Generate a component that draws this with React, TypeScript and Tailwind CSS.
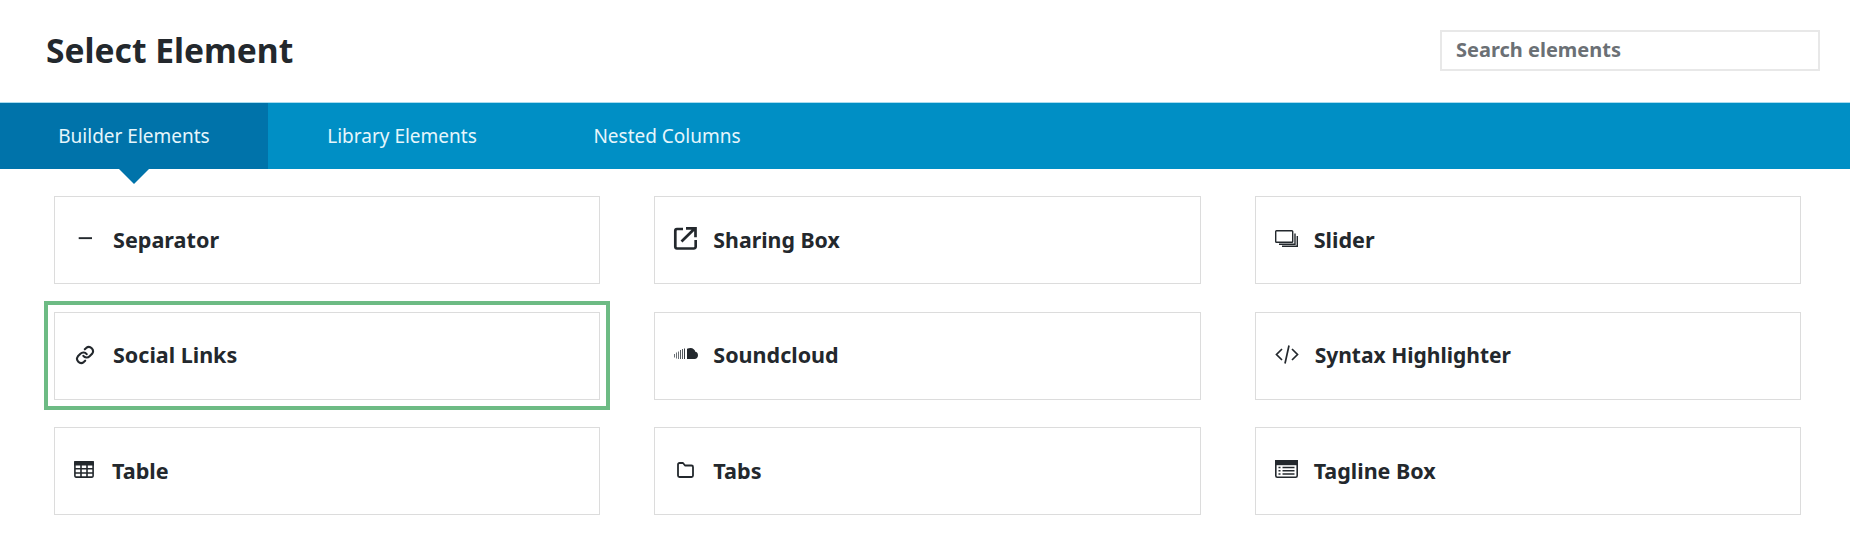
import React from "react";

function Minus() {
  return <svg viewBox="0 0 20 20" className="w-5 h-5 -translate-y-[2px]"><rect x="5.700" y="9.200" width="13.300" height="1.900" fill="#23282d" /></svg>;
}
function Share() {
  return (
    <svg viewBox="0 0 24 24" className="w-6 h-6 -translate-y-[2px]" fill="none" stroke="#23282d" strokeWidth="2.700">
      <path d="M10 3H4A1.800 1.800 0 0 0 2.300 4.800v16A1.800 1.800 0 0 0 4 22.500h17a1.800 1.800 0 0 0 1.700-1.700V14" />
      <path d="M8.500 15.500L21 3.200M13 2.300H22.500v9" />
    </svg>
  );
}
function Slides() {
  return (
    <svg viewBox="0 0 23 17" className="w-[23px] h-[17px] ml-[1px] -translate-y-[2px]" fill="none" stroke="#23282d" strokeWidth="1.400">
      <rect x="0.700" y="0.700" width="17" height="11.600" rx="0.800" />
      <path d="M20 3.500v10.800H4M22.300 6v10.300H7" />
    </svg>
  );
}
function LinkI() {
  return (
    <svg viewBox="0 0 24 24" className="w-5 h-5 ml-[2px] -translate-y-[1px]" fill="none" stroke="#23282d" strokeWidth="2.500" strokeLinecap="round">
      <path d="M10 13a5 5 0 0 0 7.500.5l3-3a5 5 0 0 0-7-7l-1.700 1.700" />
      <path d="M14 11a5 5 0 0 0-7.500-.5l-3 3a5 5 0 0 0 7 7l1.700-1.700" />
    </svg>
  );
}
function Cloud() {
  return (
    <svg viewBox="0 0 24 11" className="w-6 h-[11px] ml-[1px] -translate-y-[2px]" fill="#23282d">
      <path d="M13 .8C14.300 .2 15.500 0 16.500 0c2.600 0 4.400 1.800 4.800 3.800C22.800 3.800 24 5 24 7.200 24 9.500 22.500 11 20.500 11H13z" />
      <rect x="0" y="6" width="1" height="3.500" fill="#6b7075" />
      <rect x="2" y="4.500" width="1" height="6" fill="#6b7075" />
      <rect x="4" y="3.500" width="1" height="7.500" fill="#6b7075" />
      <rect x="6" y="2" width="1" height="9" fill="#555a5f" />
      <rect x="8" y="1" width="1" height="10" fill="#555a5f" />
      <rect x="10" y="0.500" width="1" height="10.500" fill="#3a3f44" />
    </svg>
  );
}
function Code() {
  return (
    <svg viewBox="0 0 24 19" className="w-6 h-[19px] ml-[1px] -translate-y-[1px]" fill="none" stroke="#23282d" strokeWidth="1.700">
      <path d="M7 4L1.500 9.500 7 15M17 4l5.500 5.500L17 15M14 .5L10 18.500" />
    </svg>
  );
}
function TableI() {
  return (
    <svg viewBox="0 0 20 17" className="w-5 h-[17px] ml-[1px] -translate-y-[2px]" fill="none" stroke="#23282d" strokeWidth="1.600">
      <rect x="0.900" y="0.900" width="18.200" height="15.200" rx="1" />
      <rect x="0.900" y="0.900" width="18.200" height="2.800" fill="#23282d" />
      <path d="M1 7.800h18M1 12h18M7 3.500v13M13 3.500v13" />
    </svg>
  );
}
function Folder() {
  return (
    <svg viewBox="0 0 17 16" className="w-[17px] h-4 ml-[4px] -translate-y-[1px]" fill="none" stroke="#23282d" strokeWidth="1.800" strokeLinejoin="round">
      <path d="M1 3V13.500A1.500 1.500 0 0 0 2.500 15H14.500A1.500 1.500 0 0 0 16 13.500V5A1.500 1.500 0 0 0 14.500 3.500H8L6 1H2.500A1.500 1.500 0 0 0 1 2.500z" />
    </svg>
  );
}
function Tagline() {
  return (
    <svg viewBox="0 0 23 18" className="w-[23px] h-[18px] ml-[1px] -translate-y-[2px]" fill="none" stroke="#23282d" strokeWidth="1.600">
      <rect x="0.800" y="0.800" width="21.400" height="16.400" rx="1.500" />
      <rect x="0.800" y="0.800" width="21.400" height="3.600" fill="#23282d" />
      <path d="M3.500 7.500h2M7.500 7.500h12M3.500 10.700h2M7.500 10.700h12M3.500 14h2M7.500 14h12" />
    </svg>
  );
}

const items: { label: string; icon: React.ReactNode; sel?: boolean; gap: string; size: string }[] = [
  { label: "Separator", icon: <Minus />, gap: "w-[40px]", size: "text-[21.600px]" },
  { label: "Sharing Box", icon: <Share />, gap: "w-[40px]", size: "text-[21.300px]" },
  { label: "Slider", icon: <Slides />, gap: "w-[40px]", size: "text-[21.600px]" },
  { label: "Social Links", icon: <LinkI />, sel: true, gap: "w-[40px]", size: "text-[21.500px]" },
  { label: "Soundcloud", icon: <Cloud />, gap: "w-[40px]", size: "text-[21.500px]" },
  { label: "Syntax Highlighter", icon: <Code />, gap: "w-[41px]", size: "text-[21px]" },
  { label: "Table", icon: <TableI />, gap: "w-[39px]", size: "text-[21.600px]" },
  { label: "Tabs", icon: <Folder />, gap: "w-[40px]", size: "text-[21.600px]" },
  { label: "Tagline Box", icon: <Tagline />, gap: "w-[40px]", size: "text-[21.500px]" },
];

export default function App() {
  return (
    <div className="w-[1850px] h-[539px] bg-white overflow-hidden font-['Noto_Sans','Liberation_Sans',sans-serif]">
      <header className="h-[102px] pb-[2px] pl-[46px] pr-[30px] flex items-center justify-between">
        <h1 className="text-[33.600px] font-bold text-[#23282d] m-0">Select Element</h1>
        <div className="w-[380px] h-[41px] border-2 border-[#e8e8e8] pl-[14px] flex items-center text-[20px] font-bold text-[#6b7075]">
          Search elements
        </div>
      </header>
      <nav className="h-[67px] bg-[#008fc5] flex text-[19px] text-[#e6f6fc] border-t border-[#a9dcef]">
        <div className="relative w-[268px] bg-[#0073aa] flex items-center justify-center">
          Builder Elements
          <span className="absolute left-1/2 -ml-[15px] top-full w-0 h-0 border-x-[15px] border-x-transparent border-t-[15px] border-t-[#0073aa]" />
        </div>
        <div className="w-[268px] flex items-center justify-center">Library Elements</div>
        <div className="w-[262px] flex items-center justify-center">Nested Columns</div>
      </nav>
      <main className="pt-[27px] pl-[54px] pr-[49px] grid grid-cols-3 gap-x-[54px] gap-y-[27.500px]">
        {items.map((it) => (
          <div key={it.label} className={`relative h-[88px] border border-[#dcdcdc] flex items-center pl-[18px] font-bold text-[#23282d] ${it.size}`}>
            {it.sel && <span className="absolute -inset-x-[11px] -top-[12px] -bottom-[11px] border-[4px] border-[#6dbb84]" />}
            <span className={`${it.gap} shrink-0 flex items-center`}>{it.icon}</span>
            <span>{it.label}</span>
          </div>
        ))}
      </main>
    </div>
  );
}
